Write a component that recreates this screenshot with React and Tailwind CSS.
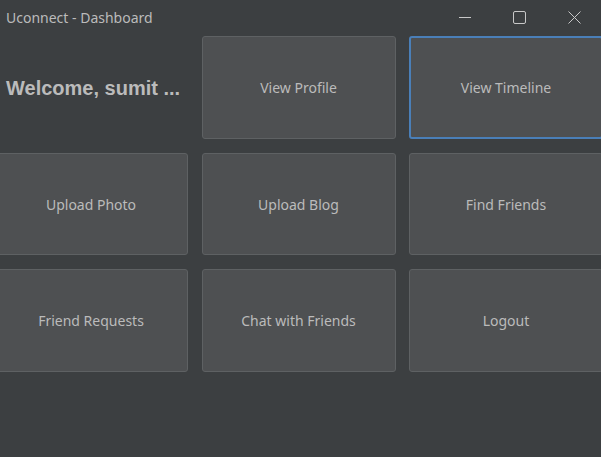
import React from 'react';

const buttons = [
  'View Profile',
  'View Timeline',
  'Upload Photo',
  'Upload Blog',
  'Find Friends',
  'Friend Requests',
  'Chat with Friends',
  'Logout',
];

function TitleBar() {
  return (
    <div className="flex h-[34px] items-center justify-between">
      <span className="pl-[6px] text-[14px] text-[#bbbbbb]">Uconnect - Dashboard</span>
      <div className="mr-[-1px] flex h-full">
        {/* minimize */}
        <div className="flex w-[55px] items-center justify-center">
          <svg width="12" height="12" viewBox="0 0 12 12">
            <line x1="0" y1="6.5" x2="12" y2="6.5" stroke="#c8c8c8" strokeWidth="1" />
          </svg>
        </div>
        {/* maximize */}
        <div className="flex w-[55px] items-center justify-center">
          <svg width="13" height="13" viewBox="0 0 13 13">
            <rect x="0.5" y="0.5" width="12" height="12" rx="1.5" fill="none" stroke="#c8c8c8" strokeWidth="1" />
          </svg>
        </div>
        {/* close */}
        <div className="flex w-[55px] items-center justify-center">
          <svg width="13" height="13" viewBox="0 0 13 13">
            <path d="M0.5 0.5 L12.5 12.5 M12.5 0.5 L0.5 12.5" stroke="#c8c8c8" strokeWidth="1" />
          </svg>
        </div>
      </div>
    </div>
  );
}

export default function App() {
  return (
    <div
      className="h-[457px] w-[601px] overflow-hidden bg-[#3c3f41]"
      style={{ fontFamily: '"Noto Sans", "Open Sans", sans-serif' }}
    >
      <TitleBar />

      {/* Dashboard grid */}
      <div className="ml-[-6px] mt-[2px] grid grid-cols-[194px_194px_194px] grid-rows-[103px_102px_103px] gap-x-[13.5px] gap-y-[14px]">
        <div className="flex items-center pl-[12px]">
          <span
            className="text-[20px] font-bold text-[#bbbbbb]"
            style={{ fontFamily: '"Liberation Sans", Arial, sans-serif' }}
          >
            Welcome, sumit ...
          </span>
        </div>
        {buttons.map((label, i) => (
          <button
            key={label}
            className={
              i === 1
                ? 'flex items-center justify-center rounded-[3px] border-2 border-[#4a7fb8] bg-[#4e5052] text-[14px] text-[#bbbbbb]'
                : 'flex items-center justify-center rounded-[3px] border border-[#5e6163] bg-[#4e5052] text-[14px] text-[#bbbbbb]'
            }
          >
            {label}
          </button>
        ))}
      </div>
    </div>
  );
}
